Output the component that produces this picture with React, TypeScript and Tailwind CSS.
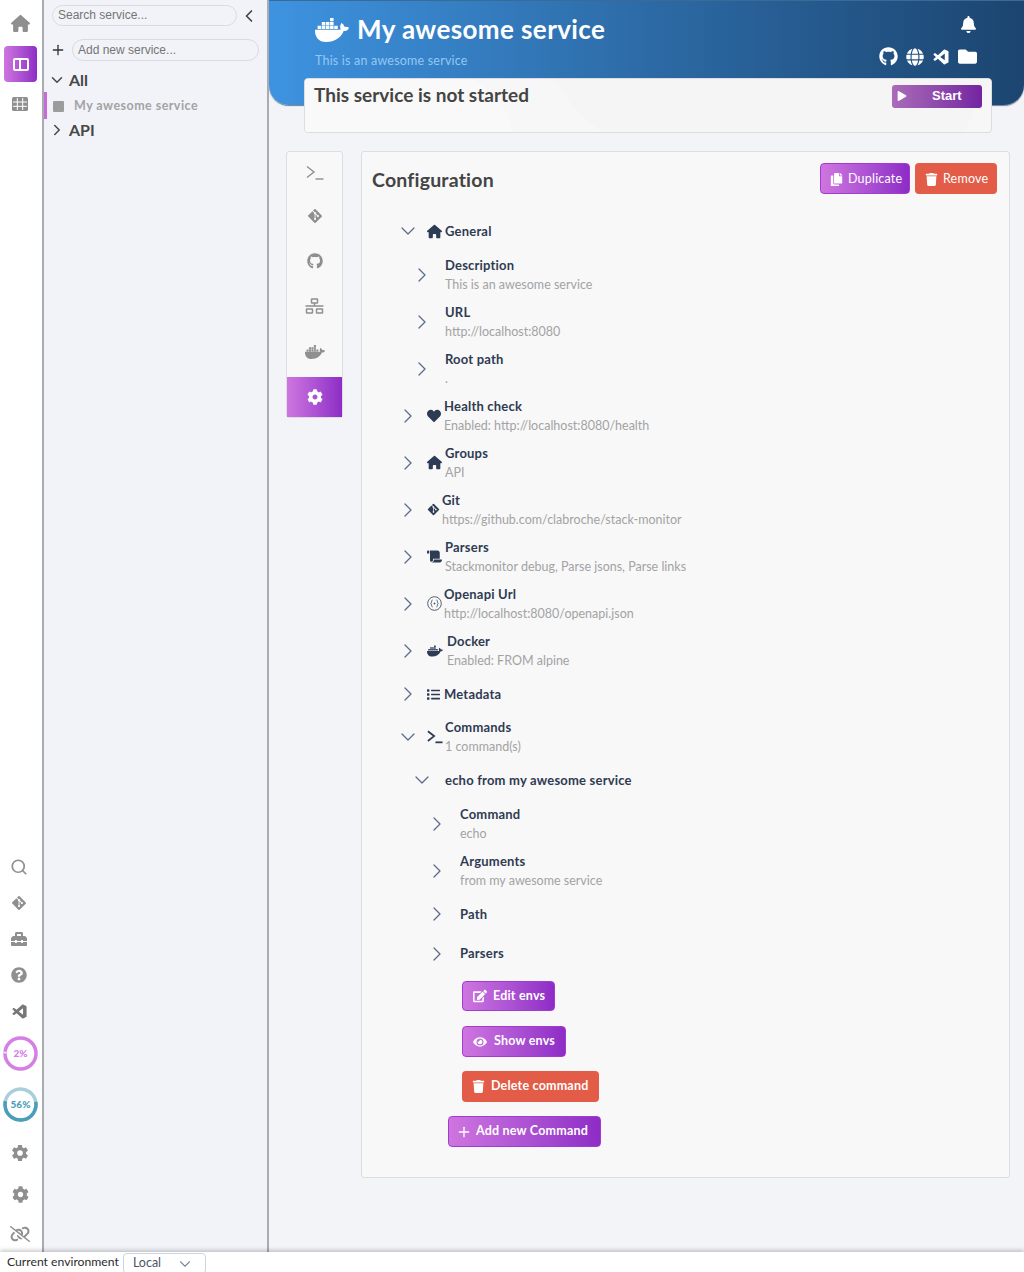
import type { ReactNode } from 'react';
import { ChevronDown, ChevronLeft, ChevronRight, Plus, Search } from 'lucide-react';
import {
  FaBell, FaCog, FaCopy, FaDocker, FaEdit, FaEye, FaFolder, FaGitAlt, FaGithub, FaGlobe, FaHeart,
  FaList, FaPlay, FaQuestionCircle, FaScroll, FaToolbox, FaTrash,
} from 'react-icons/fa';
import { BiLogoVisualStudio } from 'react-icons/bi';
import { FaHouse, FaLinkSlash } from 'react-icons/fa6';
import { IoSettingsSharp } from 'react-icons/io5';

const gradient = 'bg-gradient-to-r from-[#cf75e0] to-[#8e2bc6]';

function Prompt({ size = 18, weight = 1.4 }: { size?: number; weight?: number }) {
  return (
    <svg width={size} height={size} viewBox="0 0 18 18" fill="none" stroke="currentColor" strokeWidth={weight}>
      <path d="M1 2.5 L8 8 L1 13.5" />
      <path d="M9.5 15 H17.5" />
    </svg>
  );
}

function NetworkIcon() {
  return (
    <svg width="19" height="16" viewBox="0 0 19 16" fill="none" stroke="currentColor" strokeWidth="1.5">
      <rect x="6.5" y="1" width="6" height="4" rx="0.5" />
      <path d="M9.5 5 V8 M0.5 8 H18.5" />
      <rect x="1.5" y="11" width="6" height="4" rx="0.5" />
      <rect x="11.5" y="11" width="6" height="4" rx="0.5" />
    </svg>
  );
}

function GridIcon() {
  return (
    <svg width="16" height="14" viewBox="0 0 16 14">
      <rect width="16" height="14" rx="1.5" fill="currentColor" />
      <path d="M5.3 1 V13 M10.7 1 V13 M1 5 H15 M1 9.3 H15" stroke="#fff" strokeWidth="1" />
    </svg>
  );
}

function OpenApiIcon() {
  return (
    <svg width="15" height="15" viewBox="0 0 15 15" fill="none" stroke="currentColor" strokeWidth="0.8">
      <circle cx="7.5" cy="7.5" r="6.8" />
      <path d="M5.5 4 C4.2 4 5 7 3.8 7.5 C5 8 4.2 11 5.5 11" />
      <path d="M9.5 4 C10.8 4 10 7 11.2 7.5 C10 8 10.8 11 9.5 11" />
      <circle cx="7.5" cy="7.5" r="0.5" fill="currentColor" />
    </svg>
  );
}

function Ring({ value, label, main, track, text, turn }: {
  value: number; label: string; main: string; track: string; text: string; turn: string;
}) {
  const r = 15.5;
  const len = 2 * Math.PI * r;
  return (
    <div className="relative w-[35px] h-[35px] flex items-center justify-center">
      <svg width="35" height="35" viewBox="0 0 35 35" className={`absolute inset-0 ${turn}`}>
        <circle cx="17.5" cy="17.5" r={r} fill="none" stroke={track} strokeWidth="3.5" />
        <circle cx="17.5" cy="17.5" r={r} fill="none" stroke={main} strokeWidth="3.5" strokeDasharray={`${(len * value) / 100} ${len}`} />
      </svg>
      <span className={`relative text-[10px] font-black ${text}`}>{label}</span>
    </div>
  );
}

function Row({ pad, open, icon, gap, title, sub, height }: {
  pad: string; open?: boolean; icon?: ReactNode; gap?: string; title: string; sub?: string; height: string;
}) {
  return (
    <div className={`flex items-center ${pad} ${height}`}>
      <div className="w-[38px] flex justify-center text-[#5b6b8c] shrink-0">
        {open ? <ChevronDown size={24} strokeWidth={1.3} /> : <ChevronRight size={24} strokeWidth={1.3} />}
      </div>
      {icon ? <div className={`flex items-center text-[#2d3b55] ${gap}`}>{icon}</div> : <div className="w-1" />}
      <div className="min-w-0">
        <div className="text-[13px] leading-[19px] font-bold text-[#2f3b52] tracking-[0.2px]">{title}</div>
        {sub && <div className="text-[12.5px] leading-[19px] text-[#a3a3a3]">{sub}</div>}
      </div>
    </div>
  );
}

function Action({ icon, label, className }: { icon: ReactNode; label: string; className: string }) {
  return (
    <button className={`flex items-center rounded-[4px] text-white text-[12.5px] font-bold tracking-[0.2px] ${className}`}>
      {icon}
      {label}
    </button>
  );
}

export default function App() {
  return (
    <div className="h-screen flex flex-col overflow-hidden bg-white font-['Lato',sans-serif]">
      <div className="flex flex-1 min-h-0">
        {/* rail */}
        <aside className="w-11 shrink-0 bg-white border-r-2 border-[#a9abb0] flex flex-col justify-between text-[#8f8f8f]">
          <div className="flex flex-col items-center pr-px">
            <div className="h-[46px] flex items-center pr-px"><FaHouse size={19} /></div>
            <div className={`w-[33px] h-9 rounded-[4px] flex items-center justify-center text-white ${gradient}`}>
              <div className="w-[16px] h-[13px] rounded-[2px] border-2 border-white flex"><div className="w-1/2 border-r-2 border-white" /></div>
            </div>
            <div className="h-11 flex items-center pr-px"><GridIcon /></div>
          </div>
          <div className="flex flex-col items-center">
            <div className="h-9 flex items-center pr-[4px]"><Search size={18} strokeWidth={2.3} /></div>
            <div className="h-9 flex items-center pr-[5px]"><FaGitAlt size={16} /></div>
            <div className="h-9 flex items-center pr-[4px]"><FaToolbox size={16} /></div>
            <div className="h-9 flex items-center pr-[4px]"><FaQuestionCircle size={16} /></div>
            <div className="h-9 flex items-center pr-[4px] text-[#777]"><BiLogoVisualStudio size={17} /></div>
            <div className="h-[49px] flex items-center pr-px"><Ring value={2} label="2%" main="#f4d9f7" track="#d57ee6" text="text-[#d57ee6]" turn="rotate-180" /></div>
            <div className="h-[52px] flex items-center pr-px"><Ring value={56} label="56%" main="#4b9eb9" track="#a9cfdc" text="text-[#4b9eb9]" turn="rotate-[-10deg]" /></div>
            <div className="h-[46px] flex items-center pr-[2px]"><IoSettingsSharp size={18} /></div>
            <div className="h-9 flex items-center pr-[2px]"><FaCog size={17} /></div>
            <div className="h-10 pt-1 flex items-center pr-[2px]"><FaLinkSlash size={20} /></div>
          </div>
        </aside>

        {/* services list */}
        <aside className="w-[225px] shrink-0 bg-[#f1f3f8] border-r-2 border-[#a9abb0] pt-[5px]">
          <div className="flex items-center pl-2 h-[21px]">
            <input placeholder="Search service..." className="w-[185px] h-[21px] rounded-full border border-[#d9dbe0] px-[5px] pb-px text-[12px] font-['Liberation_Sans',sans-serif] placeholder:text-[#757575] outline-none" />
            <ChevronLeft size={20} strokeWidth={2} className="ml-[2px] text-[#3d4350]" />
          </div>
          <div className="flex items-center pl-[6px] mt-[13px] h-[22px]">
            <Plus size={16} strokeWidth={2} className="text-[#333] shrink-0" />
            <input placeholder="Add new service..." className="ml-[6px] w-[187px] h-[22px] rounded-full border border-[#d9dbe0] px-[5px] text-[12px] font-['Liberation_Sans',sans-serif] placeholder:text-[#757575] outline-none" />
          </div>
          <div className="flex items-center pl-[4px] h-[31px] pt-[7px] text-[#474747]">
            <ChevronDown size={18} strokeWidth={2} />
            <span className="ml-[3px] text-[16px] font-bold">All</span>
          </div>
          <div className="flex items-center h-[27px] border-l-[3px] border-[#c66bd8] pl-[6px] pt-px">
            <div className="w-[11px] h-[11px] rounded-[1px] bg-[#9c9c9c]" />
            <span className="ml-[10px] text-[12.5px] font-bold text-[#a3a3a3] tracking-[0.45px]">My awesome service</span>
          </div>
          <div className="flex items-center pl-[4px] h-[21px] text-[#474747]">
            <ChevronRight size={18} strokeWidth={2} />
            <span className="ml-[3px] text-[16px] font-bold">API</span>
          </div>
        </aside>

        {/* main */}
        <main className="flex-1 min-w-0 bg-[#f2f4f8] overflow-hidden">
          <header className="h-[105px] rounded-b-[20px] bg-gradient-to-r from-[#3e93e0] to-[#1c4570] border-t border-[#3a6b96] shadow-[0_1px_1px_rgba(20,50,80,0.6)] pl-[46px] pr-[47px] pt-[13px] flex justify-between text-white">
            <div>
              <div className="flex items-center h-[32px]">
                <FaDocker size={34} />
                <h1 className="ml-[8px] -mt-[2px] text-[26px] font-bold tracking-[0.4px]">My awesome service</h1>
              </div>
              <div className="mt-[6px] text-[12.5px] text-[#93c8f2] tracking-[0.2px]">This is an awesome service</div>
            </div>
            <div className="flex flex-col items-end">
              <FaBell size={17} className="mt-[2px]" />
              <div className="flex items-center gap-2 mt-[14px]">
                <FaGithub size={19} />
                <FaGlobe size={18} />
                <BiLogoVisualStudio size={18} />
                <FaFolder size={19} />
              </div>
            </div>
          </header>

          <section className="relative overflow-hidden -mt-[27px] ml-[35px] w-[688px] h-[55px] rounded-[4px] border border-[#dcdde2] bg-[#f7f7f7] pl-[9px] pr-[9px] pt-[5px] flex justify-between items-start">
            <svg width="688" height="55" viewBox="0 0 688 55" className="absolute inset-0">
              <path d="M166 0 C190 12 204 32 208 55 H0 V0 Z" fill="#f9f9f9" />
              <path d="M249 0 C262 22 280 42 300 55 H660 C668 30 680 10 688 0 Z" fill="#f5f5f5" />
            </svg>
            <h2 className="relative text-[19px] leading-[22px] font-bold text-[#444]">This service is not started</h2>
            <button className="relative mt-px w-[90px] h-[23px] rounded-[3px] bg-gradient-to-r from-[#aa6bb8] to-[#7423a0] flex items-center pl-[5px] pb-[2px] text-white">
              <FaPlay size={10} />
              <span className="ml-[25px] text-[13px] font-bold font-['Liberation_Sans',sans-serif]">Start</span>
            </button>
          </section>

          <div className="flex items-start gap-[18px] pl-[17px] mt-[18px]">
            {/* tabs */}
            <nav className="w-[57px] h-[267px] rounded-[3px] border border-[#dcdde2] bg-[#f8f8f9] flex flex-col items-center text-[#8f8f8f] shrink-0">
              <div className="h-[41px] flex items-center"><Prompt size={18} /></div>
              <div className="h-[45px] flex items-center"><FaGitAlt size={16} /></div>
              <div className="h-[45px] flex items-center"><FaGithub size={16} /></div>
              <div className="h-[46px] flex items-center"><NetworkIcon /></div>
              <div className="h-[48px] pb-[3px] flex items-center"><FaDocker size={20} /></div>
              <div className={`w-full h-10 flex items-center justify-center text-white ${gradient}`}><FaCog size={16} /></div>
            </nav>

            {/* configuration */}
            <section className="w-[649px] h-[1027px] rounded-[3px] border border-[#dcdde2] bg-[#f8f8f9] shrink-0">
              <div className="h-[59px] flex items-start justify-between pl-[10px] pr-3 pt-[11px]">
                <h2 className="mt-[3px] text-[19.5px] leading-[28px] font-bold text-[#444] tracking-[0.2px]">Configuration</h2>
                <div className="flex gap-[5px]">
                  <Action className={`w-[90px] h-[31px] pl-[9px] pt-px !font-normal border border-[#a23bd0] ${gradient}`} icon={<FaCopy size={13} className="mr-[5px]" />} label="Duplicate" />
                  <Action className="w-[82px] h-[31px] pl-[10px] pt-px !font-normal bg-[#e25c47]" icon={<FaTrash size={13} className="mr-[5px]" />} label="Remove" />
                </div>
              </div>

              <Row pad="pl-[27px]" height="h-10" open icon={<FaHouse size={15} />} gap="mr-[3px]" title="General" />
              <Row pad="pl-[41px]" height="h-[47px]" title="Description" sub="This is an awesome service" />
              <Row pad="pl-[41px]" height="h-[47px]" title="URL" sub="http://localhost:8080" />
              <Row pad="pl-[41px]" height="h-[47px]" title="Root path" sub="." />
              <Row pad="pl-[27px]" height="h-[47px]" icon={<FaHeart size={14} />} gap="mr-[3px]" title="Health check" sub="Enabled: http://localhost:8080/health" />
              <Row pad="pl-[27px]" height="h-[47px]" icon={<FaHouse size={15} />} gap="mr-[3px]" title="Groups" sub="API" />
              <Row pad="pl-[27px]" height="h-[47px]" icon={<FaGitAlt size={13} />} gap="mr-[2px]" title="Git" sub="https://github.com/clabroche/stack-monitor" />
              <Row pad="pl-[27px]" height="h-[47px]" icon={<FaScroll size={15} />} gap="mr-[3px]" title="Parsers" sub="Stackmonitor debug, Parse jsons, Parse links" />
              <Row pad="pl-[27px]" height="h-[47px]" icon={<OpenApiIcon />} gap="mr-[2px]" title="Openapi Url" sub="http://localhost:8080/openapi.json" />
              <Row pad="pl-[27px]" height="h-[47px]" icon={<FaDocker size={16} />} gap="mr-[4px]" title="Docker" sub="Enabled: FROM alpine" />
              <Row pad="pl-[27px] pt-px" height="h-[39px]" icon={<FaList size={13} />} gap="mr-[4px]" title="Metadata" />
              <Row pad="pl-[27px]" height="h-[47px]" open icon={<Prompt size={16} weight={2} />} gap="mr-[2px]" title="Commands" sub="1 command(s)" />
              <Row pad="pl-[41px]" height="h-10" open title="echo from my awesome service" />
              <Row pad="pl-[56px]" height="h-[47px]" title="Command" sub="echo" />
              <Row pad="pl-[56px]" height="h-[47px]" title="Arguments" sub="from my awesome service" />
              <Row pad="pl-[56px]" height="h-10" title="Path" />
              <Row pad="pl-[56px]" height="h-[39px]" title="Parsers" />

              <div className="flex flex-col items-start pl-[100px] pt-2 gap-[14px]">
                <Action className={`w-[93px] h-[30px] pl-[10px] border border-[#a23bd0] ${gradient}`} icon={<FaEdit size={14} className="mr-[6px]" />} label="Edit envs" />
                <Action className={`mt-px w-[104px] h-[31px] pl-[10px] border border-[#a23bd0] ${gradient}`} icon={<FaEye size={14} className="mr-[7px]" />} label="Show envs" />
                <Action className="w-[137px] h-[31px] pl-[10px] bg-[#e25c47]" icon={<FaTrash size={13} className="mr-[6px]" />} label="Delete command" />
                <Action className={`-ml-[14px] w-[153px] h-[31px] pl-[7px] border border-[#a23bd0] ${gradient}`} icon={<Plus size={16} strokeWidth={2} className="mr-[4px]" />} label="Add new Command" />
              </div>
            </section>
          </div>
        </main>
      </div>

      <footer className="relative h-5 shrink-0 bg-white shadow-[0_-2px_4px_rgba(0,0,0,0.2)] flex items-start pl-[7px] text-[12.2px] text-[#2b2b2b]">
        <span className="leading-[20px]">Current environment</span>
        <div className="ml-[4px] mt-px w-[83px] h-[21px] rounded-[4px] border border-[#cbd5e0] flex items-center justify-between pl-[9px] pr-[11px] text-[#4a5568] text-[12.5px]">
          Local
          <ChevronDown size={18} strokeWidth={1.5} className="text-[#7c8aa0]" />
        </div>
      </footer>
    </div>
  );
}
